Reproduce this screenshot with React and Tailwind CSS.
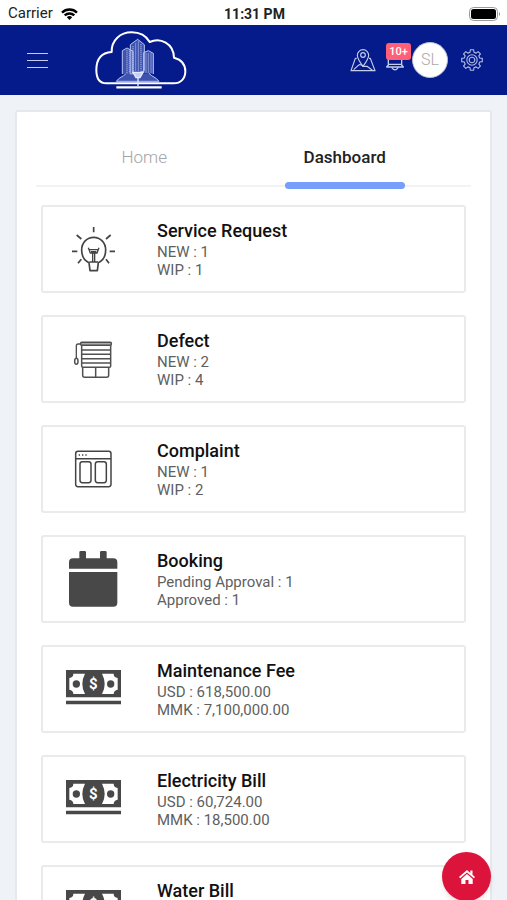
import React from 'react'

const cards = [
  { title: 'Service Request', lines: ['NEW : 1', 'WIP : 1'], Icon: BulbIcon },
  { title: 'Defect', lines: ['NEW : 2', 'WIP : 4'], Icon: BlindsIcon },
  { title: 'Complaint', lines: ['NEW : 1', 'WIP : 2'], Icon: WindowIcon },
  { title: 'Booking', lines: ['Pending Approval : 1', 'Approved : 1'], Icon: CalendarIcon },
  { title: 'Maintenance Fee', lines: ['USD : 618,500.00', 'MMK : 7,100,000.00'], Icon: CashIcon },
  { title: 'Electricity Bill', lines: ['USD : 60,724.00', 'MMK : 18,500.00'], Icon: CashIcon },
  { title: 'Water Bill', lines: [], Icon: CashIcon },
]

function BulbIcon() {
  return (
    <svg viewBox="120 345 141 147" className="w-[47px] h-[49px]" fill="none" stroke="#444" strokeWidth="5">
      <path d="M191 351v16M140 375l14 12M242 375l-14 12M126 424h16M239 424h16M154 448l-10 12M228 448l9 12" />
      <path d="M180 482h22l3-24c15-7 22-20 22-38c0-22-16-38-36-38s-36 16-36 38c0 18 7 31 22 38z" strokeLinejoin="round" />
      <path d="M175 413l6 16h20l6-16M178 419h26M183 425h16M188 430v28M194 430v28M178 456h26" strokeWidth="4" />
    </svg>
  )
}

function BlindsIcon() {
  return (
    <svg viewBox="130 90 120 117" className="w-10 h-[39px]" fill="none" stroke="#505050" strokeWidth="4.5">
      <rect x="153" y="97" width="92" height="9" rx="3" fill="#aaa" />
      <path d="M156 106v62q0 4 4 4h79q4 0 4-4v-62M156 120h87M156 133h87M156 146h87M156 159h87" />
      <path d="M159 172v24q0 6 6 6h66q6 0 6-6v-24M198 172v30" />
      <path d="M153 102h-8q-5 0-5 6v37" strokeWidth="4" />
      <ellipse cx="140" cy="154" rx="5" ry="9" />
    </svg>
  )
}

function WindowIcon() {
  return (
    <svg viewBox="136 90 114 114" className="w-[38px] h-[38px]" fill="none" stroke="#444" strokeWidth="4.5">
      <rect x="141" y="94" width="106" height="106" rx="7" />
      <path d="M141 116h106" />
      <path d="M150 105h4M160 105h4M170 105h4" />
      <rect x="154" y="125" width="33" height="63" rx="7" />
      <rect x="200" y="125" width="33" height="63" rx="7" />
    </svg>
  )
}

function CalendarIcon() {
  return (
    <svg viewBox="118 62 147 168" className="w-[49px] h-14" fill="#484848">
      <path d="M118 115V96q0-12 12-12h19V66q0-4 4-4h12q4 0 4 4v18h42V66q0-4 4-4h12q4 0 4 4v18h20q12 0 12 12v19z" />
      <path d="M118 125h145v92q0 12-12 12H130q-12 0-12-12z" />
    </svg>
  )
}

function CashIcon() {
  return (
    <svg viewBox="108 87 165 117" className="w-[55px] h-[39px]" fill="#484848">
      <path d="M108 87h165v82H108zM108 179h165v11H108z" />
      <path
        fill="#fff"
        d="M130 98h35q-8 15-8 31t8 30h-35q0-11-12-13v-35q12-2 12-13zM251 98h-35q8 15 8 31t-8 30h35q0-11 12-13v-35q-12-2-12-13z"
      />
      <circle cx="139" cy="129" r="11" />
      <circle cx="242" cy="129" r="11" />
      <text x="190" y="145" fill="#fff" fontSize="45" fontWeight="700" textAnchor="middle">$</text>
    </svg>
  )
}

function Logo() {
  return (
    <svg viewBox="284 90 276 180" className="w-[92px] h-[60px]" fill="none" stroke="#fff">
      <path
        d="M318 250c-20 0-30-15-30-40c0-33 16-52 46-54c-1-36 26-59 60-59c22 0 43 10 54 29c32-15 72 4 73 47c23 6 34 20 34 41c0 22-14 36-35 36z"
        strokeWidth="6"
        strokeLinejoin="round"
      />
      <path d="M348 262h136" strokeWidth="7" />
      <g stroke="#b9c6f3" fill="#8496de" fillOpacity=".45" strokeWidth="3">
        <path d="M390 222v-88l22-16l20 16v78l-20 8z" />
        <path d="M376 222c-8 8-20 10-28 22h128c-8-12-22-14-30-24" />
        <path d="M366 222v-70l14-8l18 10v68M430 218v-60l14-6l15 8v62" />
      </g>
      <path
        d="M380 150v70M387 152v68M398 138v80M406 130v84M414 124v88M422 132v80M437 160v58M444 160v60M452 160v60"
        stroke="#dfe5ff"
        strokeWidth="2"
        strokeDasharray="4 2"
      />
      <path d="M398 217h30l-9 16h-12zM413 232v26" stroke="#e6eaff" fill="#c5cff5" strokeWidth="4" />
    </svg>
  )
}

function MapIcon() {
  return (
    <svg viewBox="287 142 78 69" className="w-[26px] h-[23px]" fill="none" stroke="#c5cdec" strokeWidth="3.5" strokeLinejoin="round">
      <path d="M326 194c-10-13-17-23-17-33a17 17 0 0 1 34 0c0 10-7 20-17 33z" />
      <circle cx="326" cy="160" r="7" />
      <path d="M307 170h-4l-13 37h72l-14-37h-4M298 204l14-13q6-5 14 3h12l16 12" />
    </svg>
  )
}

function BellIcon() {
  return (
    <svg viewBox="396 144 54 66" className="w-[18px] h-[22px]" fill="none" stroke="#c5cdec" strokeWidth="4">
      <path d="M403 192v-22c0-14 8-22 20-22s20 8 20 22v22l5 6h-50z" strokeLinejoin="round" />
      <path d="M403 190h40M413 199q10 15 20 0" />
    </svg>
  )
}

// outline of an eight-toothed wheel centred on 0,0
function gearPath() {
  const points = []
  for (let i = 0; i < 8; i++) {
    const base = (i * Math.PI) / 4
    const corners = [[-0.25, 8], [-0.16, 10.4], [0.16, 10.4], [0.25, 8]]
    corners.forEach(([a, r]) => {
      points.push(`${(r * Math.cos(base + a)).toFixed(2)} ${(r * Math.sin(base + a)).toFixed(2)}`)
    })
  }
  return `M${points.join('L')}Z`
}

function GearIcon() {
  return (
    <svg viewBox="-11 -11 22 22" className="w-[22px] h-[22px]" fill="none" stroke="#b4bee4" strokeWidth="1.1" strokeLinejoin="round">
      <path d={gearPath()} />
      <circle r="5.2" />
      <circle r="2.8" />
    </svg>
  )
}

function StatusBar() {
  return (
    <div className="h-[25px] shrink-0 bg-white text-[#222] grid grid-cols-3 items-center pl-2 pr-[6px] pt-[2px] text-[15px]">
      <div className="flex items-center gap-2">
        <span>Carrier</span>
        <svg viewBox="0 0 17 12" className="w-[17px] h-3" fill="none" stroke="#000" strokeWidth="2.4">
          <path d="M1 4.6a10.8 10.8 0 0 1 15 0M3.7 7.4a7 7 0 0 1 9.6 0" />
          <path d="M8.500 12L5.800 9.300a4 4 0 0 1 5.400 0z" fill="#000" stroke="none" />
        </svg>
      </div>
      <span className="text-center text-sm font-bold">11:31 PM</span>
      <svg viewBox="0 0 32 14" className="w-8 h-[14px] justify-self-end">
        <rect x=".5" y=".5" width="28" height="13" rx="4" fill="none" stroke="#999" />
        <rect x="2" y="2" width="25" height="10" rx="2.500" />
        <path d="M30 5q2 2 0 4z" fill="#888" />
      </svg>
    </div>
  )
}

function Header() {
  return (
    <header className="h-[70px] shrink-0 bg-[#051a8b] flex items-center pl-[27px] pr-6">
      <button type="button" aria-label="Open menu" className="flex flex-col gap-[6px] w-[21px]">
        <span className="h-px bg-[#c5cdec]" />
        <span className="h-px bg-[#c5cdec]" />
        <span className="h-px bg-[#c5cdec]" />
      </button>
      <a href="#home" aria-label="Home page" className="ml-[47px]">
        <Logo />
      </a>
      <div className="ml-auto flex items-center">
        <button type="button" aria-label="Map"><MapIcon /></button>
        <button type="button" aria-label="Notifications" className="relative ml-[10px]">
          <BellIcon />
          <span className="absolute -top-[6px] left-0 w-[25px] h-[17px] rounded-[3px] bg-[#ff5f77] text-white text-[11px] leading-[17px] font-medium text-center">
            10+
          </span>
        </button>
        <button
          type="button"
          aria-label="Account"
          className="ml-2 w-9 h-9 rounded-full bg-white border border-[#b8bdcc] text-[#aaa] text-base font-light"
        >
          SL
        </button>
        <button type="button" aria-label="Settings" className="ml-[13px]"><GearIcon /></button>
      </div>
    </header>
  )
}

function Tabs() {
  return (
    <div role="tablist" className="flex mx-[19px] pl-2 pr-[26px] border-b-2 border-[#f2f3f4] h-[75px]">
      <button type="button" role="tab" aria-selected="false" className="flex-1 pt-[18px] text-[17px] font-light text-[#a3a5a8]">
        Home
      </button>
      <button type="button" role="tab" aria-selected="true" className="relative flex-1 pt-[18px] text-[17px] font-medium text-[#222]">
        Dashboard
        <span className="absolute left-1/5 -bottom-1 w-3/5 h-[7px] rounded-full bg-[#759ffb]" />
      </button>
    </div>
  )
}

function StatCard({ title, lines, Icon }) {
  return (
    <a href="#details" className="flex h-[88px] rounded-[3px] border-2 border-[#e8eaec] bg-white">
      <div className="w-[100px] flex items-center justify-center">
        <Icon />
      </div>
      <div className="ml-[14px] pt-3">
        <h2 className="text-lg leading-6 font-medium text-[#111]">{title}</h2>
        {lines.map((line) => (
          <p key={line} className="text-[15px] leading-[18px] text-[#606060]">{line}</p>
        ))}
      </div>
    </a>
  )
}

export default function App() {
  return (
    <div className="h-screen flex flex-col overflow-hidden bg-[#eff3f8] font-['Roboto',sans-serif]">
      <StatusBar />
      <Header />
      <main className="flex-1 min-h-0 overflow-y-auto [scrollbar-width:none] px-[15px] py-[15px]">
        <div className="rounded-[3px] border-2 border-[#e5e8ec] bg-white pb-6">
          <Tabs />
          <div className="flex flex-col gap-[22px] mt-[18px] px-6">
            {cards.map((card) => (
              <StatCard key={card.title} {...card} />
            ))}
          </div>
        </div>
      </main>
      <a
        href="#top"
        aria-label="Home"
        className="fixed right-4 -bottom-px w-[49px] h-[49px] rounded-full bg-[#dc143c] shadow-md flex items-center justify-center"
      >
        <svg viewBox="0 0 18 16" className="w-[18px] h-4" fill="#fff">
          <path d="M9 1L1 8l1.200 1.300L9 3.400l6.800 5.900L17 8l-2.500-2.200V1.500h-2.200v2.400z" />
          <path d="M9 5l-5.700 5v5h4.200v-4h3v4h4.200v-5z" />
        </svg>
      </a>
    </div>
  )
}
